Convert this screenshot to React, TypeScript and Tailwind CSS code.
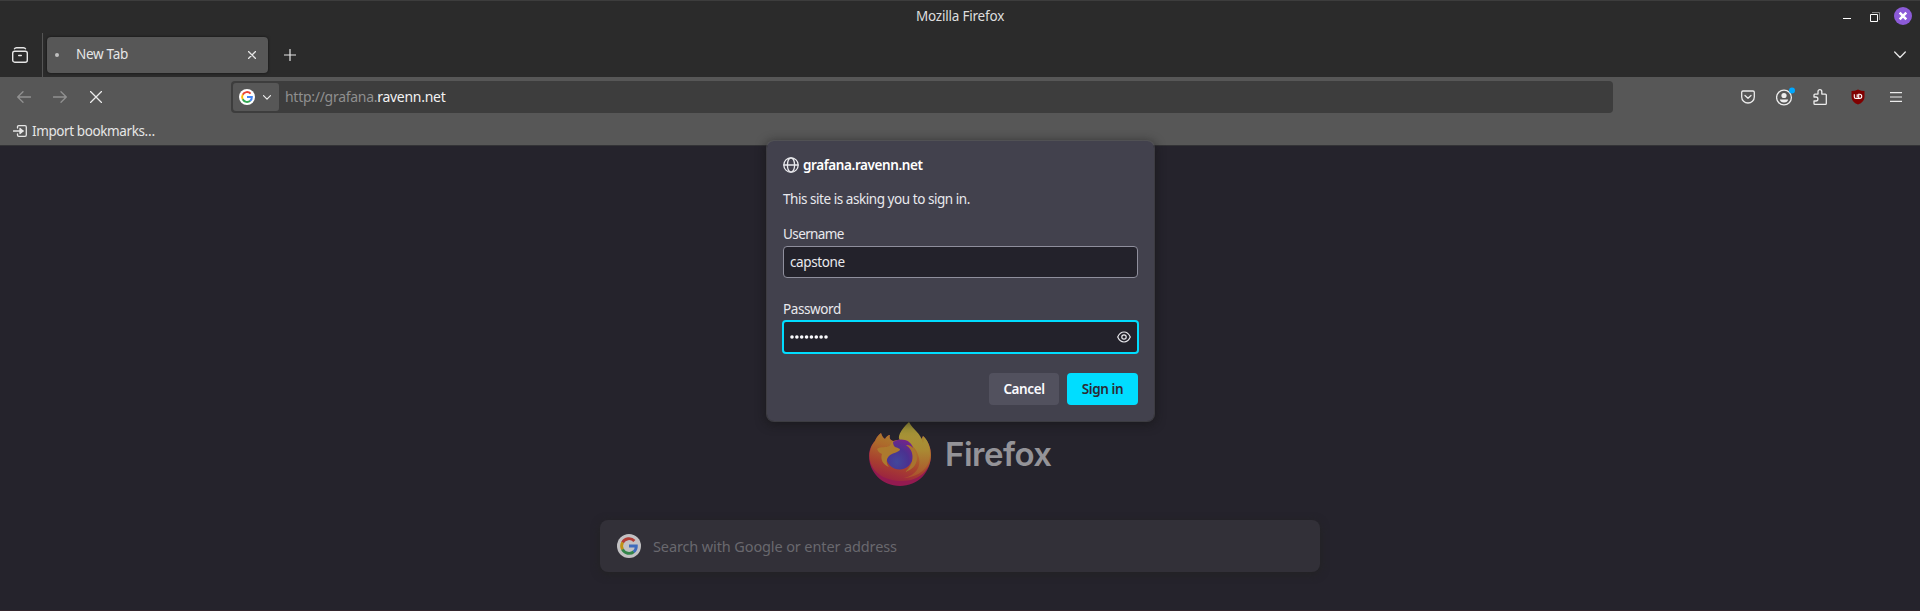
import React from 'react';

const GoogleG = ({ className }: { className: string }) => (
  <svg viewBox="0 0 24 24" className={className}>
    <circle cx="12" cy="12" r="12" fill="#fff" />
    <g fill="none" strokeWidth="2.9">
      <path d="M17.4 6.9A7.4 7.4 0 0 0 5.5 8.6" stroke="#ea4335" />
      <path d="M5.6 8.4A7.4 7.4 0 0 0 5.6 15.6" stroke="#fbbc05" />
      <path d="M5.5 15.4A7.4 7.4 0 0 0 16.9 17.6" stroke="#34a853" />
      <path d="M16.7 17.8A7.2 7.2 0 0 0 19.3 12H12" stroke="#4285f4" />
    </g>
  </svg>
);

const stroke = { fill: 'none', stroke: 'currentColor', strokeLinecap: 'round', strokeLinejoin: 'round' } as const;

const FirefoxLogo = () => (
  <svg viewBox="0 0 62 64" className="h-16 w-[62px] shrink-0">
    <defs>
      <linearGradient id="body" x1="0.75" y1="0.05" x2="0.4" y2="1">
        <stop offset="0" stopColor="#a8862f" />
        <stop offset="0.35" stopColor="#ad6a2b" />
        <stop offset="0.7" stopColor="#a8402f" />
        <stop offset="1" stopColor="#9c2440" />
      </linearGradient>
      <linearGradient id="flame" x1="0.4" y1="0" x2="0.4" y2="1">
        <stop offset="0" stopColor="#a39a3a" />
        <stop offset="0.5" stopColor="#aa8a33" />
        <stop offset="1" stopColor="#ab4f2c" />
      </linearGradient>
      <radialGradient id="globe" cx="0.4" cy="0.75" r="0.8">
        <stop offset="0" stopColor="#42479a" />
        <stop offset="0.55" stopColor="#4b3190" />
        <stop offset="1" stopColor="#76238a" />
      </radialGradient>
    </defs>
    <path d="M12 11C13 14 14 16 16 17C17 15 19 13 21 13C20 16 21 18 24 19L34 17C40 15 47 18 50 22L54 14C60 20 62 27 62 33C62 50 49 64 31 64C13 64 0 50 0 34C0 27 3 22 6 19C7 16 9 13 12 11Z" fill="#931a50" />
    <path d="M12 11C13 14 14 16 16 17C17 15 19 13 21 13C20 16 21 18 24 19L34 17C40 15 47 18 50 22L54 14C60 20 62 27 62 33C62 48 50 59 33 59C16 59 4 51 1 39C-1 30 3 22 6 19C7 16 9 13 12 11Z" fill="url(#body)" />
    <path d="M40 0C44 8 52 11 54 21C55 18 55 16 54 14C59 18 61 25 61 32C61 46 50 55 35 56C47 53 52 45 50 36C48 26 41 19 31 18C28 16 31 8 40 0Z" fill="url(#flame)" />
    <path d="M22 22C25 18 31 16.500 36 18C40 19 43 22 44 26V34A13.500 13.500 0 0 1 17 34C17 29 19 25 22 22Z" fill="url(#globe)" />
    <path d="M8 27C12 24 17 26 20 24C22 22 22 20 24 19C24 21 24 23 26 25C28 26 31 26 31 28C28 31 23 31 20 34C17 37 17 42 20 45C14 43 11 37 13 32C10 31 9 29 8 27Z" fill="#ad7a2e" />
    <path d="M37 23C42 22 48 28 48 36C48 43 43 48 36 50C41 46 44 40 43.500 34C43 29 41 26 37 23Z" fill="#a8742f" />
  </svg>
);

const TitleBar = () => (
  <div className="flex h-8 items-center border-t border-[#3d3d3d]">
    <div className="flex-1" />
    <span className="text-[13.5px] tracking-[-0.2px] text-[#dedede]">Mozilla Firefox</span>
    <div className="flex flex-1 items-center justify-end">
      <svg viewBox="0 0 8 1" className="mt-1 mr-[19px] h-px w-2"><path d="M0 .5h8" stroke="#fff" /></svg>
      <svg viewBox="0 0 10 10" className="mr-[14px] size-[10px]">
        <path d="M2 .5h7.500v7.500" fill="none" stroke="#888" />
        <path d="M.5 2.500h7v7h-7z" fill="none" stroke="#fff" />
      </svg>
      <svg viewBox="0 0 18 18" className="-mt-0.5 mr-2 size-[18px]">
        <circle cx="9" cy="9" r="9" fill="#8c5bd8" />
        <path d="M5.700 5.700l6.600 6.600M12.300 5.700l-6.600 6.600" stroke="#fff" strokeWidth="2.500" />
      </svg>
    </div>
  </div>
);

const TabStrip = () => (
  <div className="flex h-[45px] items-center text-[#e6e6e6]">
    <svg viewBox="0 0 16 16" className="ml-3 size-4" {...stroke} strokeWidth="1.4">
      <rect x=".7" y="4.200" width="14.600" height="11" rx="2" />
      <path d="M2.500 1.800Q3 .7 4.500 .7h7Q13 .7 13.500 1.800M6.700 8.500h2.600" />
    </svg>
    <div className="ml-[14px] h-11 w-px bg-[#555]" />
    <div className="ml-1 flex h-9 w-[221px] items-center rounded bg-[#575757] shadow-[0_0_3px_rgba(0,0,0,0.6)]">
      <div className="ml-2 size-1 rounded-full bg-[#c0c0c0]" />
      <span className="ml-[17px] flex-1 text-[13.5px] tracking-[-0.3px]">New Tab</span>
      <svg viewBox="0 0 8 8" className="mr-3 size-2" {...stroke} strokeWidth="1.3"><path d="M.4.4l7.200 7.200M7.600.4L.4 7.600" /></svg>
    </div>
    <svg viewBox="0 0 12 12" className="ml-4 size-3" {...stroke} strokeWidth="1.200"><path d="M6 .4v11.200M.4 6h11.200" /></svg>
    <svg viewBox="0 0 12 8" className="mr-[14px] ml-auto h-2 w-3" {...stroke} strokeWidth="1.300"><path d="M.7 1L6 6.500 11.300 1" /></svg>
  </div>
);

const NavBar = () => (
  <div className="flex h-10 items-center bg-[#575757] text-[#ececec]">
    <svg viewBox="0 0 14 12" className="ml-[17px] h-3 w-[14px] text-[#919191]" {...stroke} strokeWidth="1.300"><path d="M13.500 6H.8M6 .7L.7 6 6 11.300" /></svg>
    <svg viewBox="0 0 14 12" className="ml-[22px] h-3 w-[14px] text-[#919191]" {...stroke} strokeWidth="1.300"><path d="M.5 6h12.700M8 .7L13.300 6 8 11.300" /></svg>
    <svg viewBox="0 0 12 12" className="ml-[23px] size-3" {...stroke} strokeWidth="1.300"><path d="M.5.5l11 11M11.500.5l-11 11" /></svg>
    <div className="ml-[129px] flex h-8 w-[1382px] items-center rounded bg-[#3d3d3d] pl-0.5">
      <div className="flex h-7 w-[46px] items-center rounded-[3px] bg-[#575757] pl-1.5">
        <GoogleG className="size-4" />
        <svg viewBox="0 0 8 5" className="ml-2 h-[5px] w-2" {...stroke} strokeWidth="1.200"><path d="M.5.6L4 4.200 7.500.6" /></svg>
      </div>
      <span className="ml-1.5 text-sm tracking-[-0.28px] text-[#8f8f8f]">http://grafana.<span className="text-[#f2f2f2]">ravenn.net</span></span>
    </div>
    <svg viewBox="0 0 14 14" className="ml-32 size-[14px]" {...stroke} strokeWidth="1.300">
      <path d="M2 1h10q1.300 0 1.300 1.300V7a6.300 6 0 0 1-12.600 0V2.300Q.7 1 2 1zM4 5.500l3 2.800 3-2.800" />
    </svg>
    <svg viewBox="0 0 20 20" className="-mt-[3px] ml-[21px] size-5">
      <circle cx="8" cy="11.500" r="7.400" fill="none" stroke="#ececec" strokeWidth="1.300" />
      <circle cx="8" cy="9.500" r="2.600" fill="#ececec" />
      <path d="M3.800 13.500h8.400q-.6 3-4.200 3t-4.200-3z" fill="#ececec" />
      <circle cx="16" cy="4.500" r="3" fill="#00a8ff" />
    </svg>
    <svg viewBox="0 0 14 16" className="ml-[17px] h-4 w-[14px]" {...stroke} strokeWidth="1.300">
      <path d="M1 8V6q0-.9.9-.9H5V2.600a1.900 1.900 0 0 1 3.800 0v2.500h3.600q.9 0 .9.900v8.400q0 .9-.9.900H1.900q-.9 0-.9-.9V12h1.900a2 2 0 0 0 0-4z" />
    </svg>
    <svg viewBox="0 0 14 16" className="ml-6 h-4 w-[14px]">
      <path d="M7 .4Q10 2 13.500 2v6Q13.500 13 7 15.600 .5 13 .5 8V2Q4 2 7 .4z" fill="#800000" />
      <path d="M3.300 5.300v2.600q0 1.500 1.500 1.500h2.900V5.300h1a2 2 0 0 1 0 4.100h-1M6.200 5.300v3" fill="none" stroke="#fff" strokeWidth="1.100" />
    </svg>
    <svg viewBox="0 0 12 10" className="ml-[25px] h-[10px] w-3" {...stroke} strokeLinecap="butt" strokeWidth="1.100"><path d="M0 .6h12M0 5h12M0 9.400h12" /></svg>
  </div>
);

const Bookmarks = () => (
  <div className="flex h-[29px] items-center border-b border-[#333336] bg-[#575757] text-[#e6e6e6]">
    <svg viewBox="0 0 14 12" className="ml-[13px] h-3 w-[14px]" {...stroke} strokeWidth="1.300">
      <path d="M4.500 3V2Q4.500.7 5.800.7h6.200q1.300 0 1.300 1.300v8q0 1.300-1.300 1.300H5.800Q4.500 11.300 4.500 10V9M.5 6H10" />
      <path d="M7 3.500L10 6 7 8.500z" fill="currentColor" />
    </svg>
    <span className="ml-[5px] text-[13.5px] tracking-[-0.4px]">Import bookmarks…</span>
  </div>
);

const SignInDialog = () => (
  <div className="absolute top-[140px] left-[766px] h-[282px] w-[389px] rounded-lg border border-[#5b5b62]/50 bg-[#42414d] bg-clip-padding px-4 text-[13.5px] tracking-[-0.4px] text-[#e9e9ed] shadow-[0_2px_10px_1px_rgba(20,20,20,0.55)]">
    <div className="mt-[14px] flex h-5 items-center">
      <svg viewBox="0 0 16 16" className="size-4" {...stroke} strokeWidth="1.300">
        <circle cx="8" cy="8" r="7.200" /><ellipse cx="8" cy="8" rx="3.600" ry="7.200" /><path d="M1 8h14" />
      </svg>
      <span className="mt-px ml-1 font-semibold text-white">grafana.ravenn.net</span>
    </div>
    <div className="mt-[14px] h-5 leading-5 tracking-[-0.45px]">This site is asking you to sign in.</div>
    <div className="mt-[15px] h-5 leading-5 tracking-[-0.6px]">Username</div>
    <div className="mt-[2px] flex h-8 items-center rounded border border-[#8f8f9d] bg-[#23222b] px-1.5 pt-px">capstone</div>
    <div className="mt-[21px] h-5 leading-5">Password</div>
    <div className="mt-[1px] -mx-px flex h-[34px] items-center rounded border-2 border-[#00ddff] bg-[#23222b] pr-1.5 pl-1.5">
      <svg viewBox="0 0 38 4" className="h-1 w-[38px]" fill="#fbfbfe">
        {[2, 6.86, 11.71, 16.57, 21.43, 26.29, 31.14, 36].map((x) => <circle key={x} cx={x} cy="2" r="1.800" />)}
      </svg>
      <svg viewBox="0 0 14 12" className="ml-auto h-3 w-[14px]" {...stroke} strokeWidth="1.200">
        <path d="M.7 6Q3 1 7 1t6.300 5Q11 11 7 11T.7 6z" /><circle cx="7" cy="6" r="2.200" />
      </svg>
    </div>
    <div className="mt-[19px] flex h-8 justify-end gap-2 font-semibold">
      <button className="w-[70px] rounded bg-[#52515e] pt-px text-[#fbfbfe]">Cancel</button>
      <button className="w-[71px] rounded bg-[#00ddff] pt-px text-[#2b2a33]">Sign in</button>
    </div>
  </div>
);

export default function App() {
  return (
    <div className="relative flex h-[611px] w-[1920px] flex-col overflow-hidden bg-[#2b2b2b] font-['Noto_Sans',sans-serif]">
      <TitleBar />
      <TabStrip />
      <NavBar />
      <Bookmarks />
      <main className="flex flex-1 flex-col items-center border-b border-[#33252d] bg-[#25232c]">
        <div className="mt-[276px] flex h-16 w-[182px] items-center">
          <FirefoxLogo />
          <span className="mt-0.5 ml-[14px] font-['Inter',sans-serif] text-[33px] font-semibold tracking-[-0.5px] text-[#949398]">Firefox</span>
        </div>
        <div className="mt-[34px] flex h-[52px] w-[720px] items-center rounded-lg bg-[#323038] pl-[17px] shadow-[0_2px_8px_rgba(35,35,35,1)]">
          <GoogleG className="size-6 opacity-70" />
          <span className="mt-0.5 ml-3 text-[14.5px] tracking-[-0.12px] text-[#69686e]">Search with Google or enter address</span>
        </div>
      </main>
      <SignInDialog />
    </div>
  );
}
